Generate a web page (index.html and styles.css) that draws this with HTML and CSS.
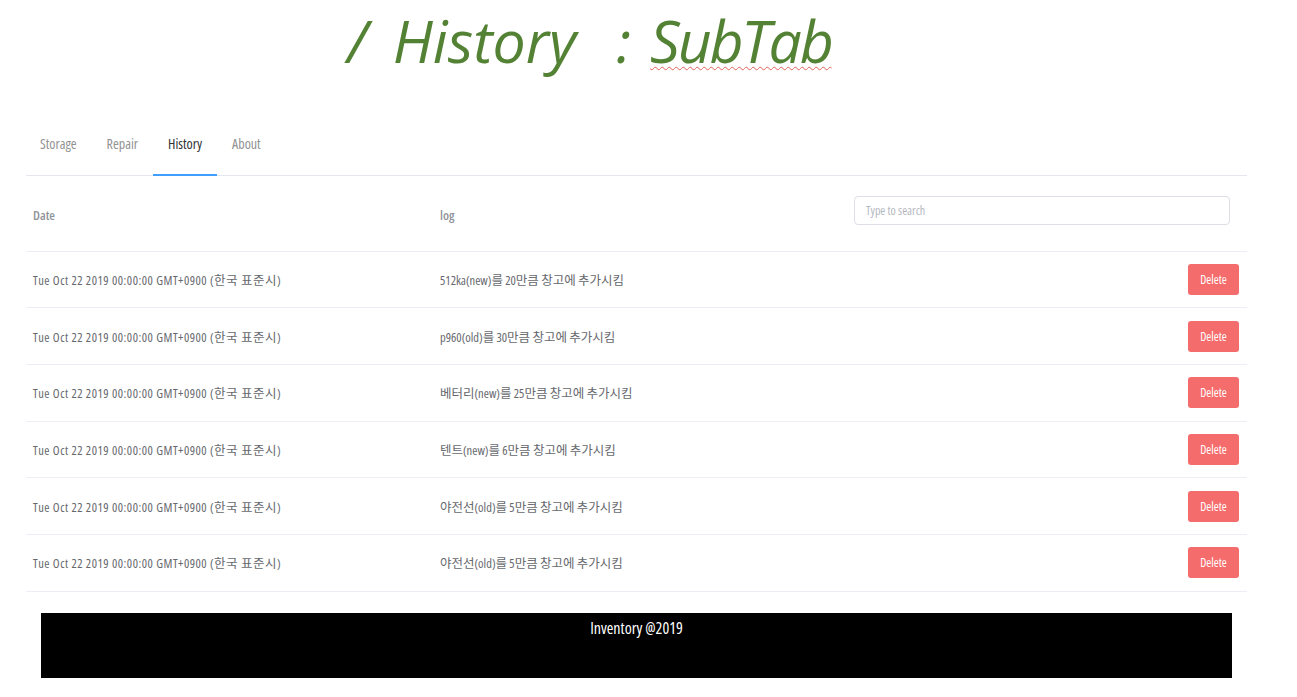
FILE: index.html
```html
<!DOCTYPE html>
<html lang="ko">
<head>
<meta charset="utf-8">
<title>History SubTab</title>
<link rel="stylesheet" href="styles.css">
</head>
<body>
<h1 class="title"><span class="t-slash">/</span><span class="t-word">History</span><span class="t-colon">:</span><span class="t-sub">SubTab</span></h1>

<div class="panel">
  <nav class="tabs">
    <a class="tab">Storage</a>
    <a class="tab">Repair</a>
    <a class="tab active">History</a>
    <a class="tab">About</a>
  </nav>

  <div class="table">
    <div class="row head">
      <div class="cell">Date</div>
      <div class="cell">log</div>
      <div class="cell"><input class="search" type="text" placeholder="Type to search"></div>
    </div>
    <div class="row">
      <div class="cell date">Tue Oct 22 2019 00:00:00 GMT+0900 (한국 표준시)</div>
      <div class="cell">512ka(new)를 20만큼 창고에 추가시킴</div>
      <div class="cell act"><button class="del">Delete</button></div>
    </div>
    <div class="row">
      <div class="cell date">Tue Oct 22 2019 00:00:00 GMT+0900 (한국 표준시)</div>
      <div class="cell">p960(old)를 30만큼 창고에 추가시킴</div>
      <div class="cell act"><button class="del">Delete</button></div>
    </div>
    <div class="row">
      <div class="cell date">Tue Oct 22 2019 00:00:00 GMT+0900 (한국 표준시)</div>
      <div class="cell">베터리(new)를 25만큼 창고에 추가시킴</div>
      <div class="cell act"><button class="del">Delete</button></div>
    </div>
    <div class="row">
      <div class="cell date">Tue Oct 22 2019 00:00:00 GMT+0900 (한국 표준시)</div>
      <div class="cell">텐트(new)를 6만큼 창고에 추가시킴</div>
      <div class="cell act"><button class="del">Delete</button></div>
    </div>
    <div class="row">
      <div class="cell date">Tue Oct 22 2019 00:00:00 GMT+0900 (한국 표준시)</div>
      <div class="cell">야전선(old)를 5만큼 창고에 추가시킴</div>
      <div class="cell act"><button class="del">Delete</button></div>
    </div>
    <div class="row">
      <div class="cell date">Tue Oct 22 2019 00:00:00 GMT+0900 (한국 표준시)</div>
      <div class="cell">야전선(old)를 5만큼 창고에 추가시킴</div>
      <div class="cell act"><button class="del">Delete</button></div>
    </div>
  </div>
</div>

<footer class="footer">Inventory @2019</footer>
</body>
</html>
```

FILE: styles.css
```css
* { box-sizing: border-box; }

html, body {
  margin: 0;
  padding: 0;
  background: #fff;
}

body {
  font-family: "Open Sans", "Noto Sans CJK KR", sans-serif;
  font-stretch: 75%;
  color: #66686d;
  width: 1297px;
  overflow: hidden;
}

.title {
  margin: 0 0 0 347px;
  font-family: "Open Sans", "Noto Sans", sans-serif;
  font-stretch: 100%;
  font-style: italic;
  font-weight: 400;
  font-size: 59px;
  line-height: 80px;
  height: 80px;
  color: #548235;
  white-space: nowrap;
  display: flex;
}

.t-word { margin-left: 25px; }
.t-colon { margin-left: 40px; }
.t-sub {
  margin-left: 19px;
  letter-spacing: -2.2px;
  text-decoration: underline wavy #e0605a;
  text-decoration-thickness: 1px;
  text-underline-offset: 3px;
}

.panel {
  margin: 32px 0 0 26px;
  width: 1221px;
}

.tabs {
  display: flex;
  border-bottom: 1px solid #e4e7ed;
}

.tab {
  padding: 22px 15px 20px;
  line-height: 20px;
  font-size: 14px;
  color: #929292;
  border-bottom: 2px solid transparent;
  margin-bottom: -1px;
}

.tab:first-child { padding-left: 14px; }

.tab.active {
  color: #303133;
  border-bottom-color: #409eff;
}

.table { display: flex; flex-direction: column; }

.row {
  display: grid;
  grid-template-columns: 407px 414px 1fr;
  height: 56.7px;
  align-items: center;
  border-bottom: 1px solid #ebeef5;
  font-size: 12.5px;
}

.row.head {
  height: 75.5px;
  padding-top: 4px;
  font-weight: 600;
  font-size: 13px;
  color: #909399;
}

.cell {
  padding: 0 7px;
  white-space: nowrap;
}

.cell.date { letter-spacing: 0.5px; }

.act {
  display: flex;
  justify-content: flex-end;
  padding-right: 8px;
}

.search {
  display: block;
  width: 376px;
  height: 29px;
  margin-bottom: 10px;
  border: 1px solid #dcdfe6;
  border-radius: 4px;
  padding: 0 11px;
  font-family: inherit;
  font-weight: 400;
  font-stretch: 75%;
  font-size: 12px;
  color: #606266;
  outline: none;
}

.search::placeholder { color: #b4b8bf; }

.del {
  width: 51px;
  height: 31px;
  border: 0;
  border-radius: 3px;
  background: #f56c6c;
  color: #fff;
  font-family: inherit;
  font-weight: 400;
  font-stretch: 75%;
  font-size: 12px;
  padding: 0;
}

.footer {
  margin: 21px 0 0 41px;
  width: 1191px;
  height: 65px;
  background: #000;
  color: #fff;
  text-align: center;
  font-size: 16px;
  padding-top: 4px;
}
```
